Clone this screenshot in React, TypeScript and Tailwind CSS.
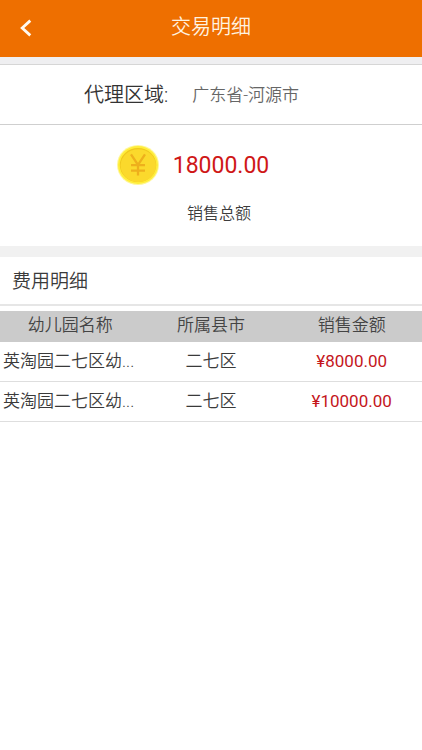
interface SaleRow {
  id: number;
  name: string;
  county: string;
  amount: string;
}

const rows: SaleRow[] = [
  { id: 1, name: '英淘园二七区幼...', county: '二七区', amount: '¥8000.00' },
  { id: 2, name: '英淘园二七区幼...', county: '二七区', amount: '¥10000.00' },
];

function BackIcon() {
  return (
    <svg viewBox="0 0 12 18" className="h-[18px] w-3" fill="none" aria-hidden="true">
      <path d="M10.3 1.6 2.2 9l8.1 7.4" stroke="#fffaf0" strokeWidth="2.8" />
    </svg>
  );
}

function CoinIcon() {
  return (
    <svg viewBox="0 0 42 40" className="h-10 w-[42px]" fill="none" aria-hidden="true">
      <ellipse cx="21" cy="20" rx="21" ry="20" fill="#fff799" />
      <ellipse cx="21" cy="20" rx="20" ry="19" fill="#ffed3a" />
      <ellipse cx="21" cy="20" rx="18.2" ry="17" fill="#f0c81e" />
      <ellipse cx="21.3" cy="20.6" rx="17.7" ry="16.3" fill="#fbd92c" />
      <path
        d="M14 9.4 21 20l7-10.6M21 19.6v11M14 20.2h14M14 25.6h14"
        stroke="#eeb01c"
        strokeWidth="2.3"
      />
    </svg>
  );
}

function Header() {
  return (
    <header className="relative flex h-[57px] items-center justify-center bg-[#ee6f00] pb-1">
      <button type="button" aria-label="返回" className="absolute inset-y-0 left-0 flex items-center px-5 pb-0.5">
        <BackIcon />
      </button>
      <h1 className="text-[20px] leading-7 font-[350] text-[#fff3e0]">交易明细</h1>
    </header>
  );
}

/** Three equal columns: kindergarten, county, amount. */
function SalesTable() {
  return (
    <table className="mt-[5px] w-full table-fixed border-separate border-spacing-0 text-[17px] leading-6 text-[#3a3a3a]">
      <thead>
        <tr className="h-[31px] bg-[#cbcbcb] text-[#444444]">
          <th className="p-0 pb-1 font-[350]">幼儿园名称</th>
          <th className="p-0 pb-1 font-[350]">所属县市</th>
          <th className="p-0 pb-1 font-[350]">销售金额</th>
        </tr>
      </thead>
      <tbody>
        {rows.map((row) => (
          <tr key={row.id} className="h-10">
            <td className="border-b border-[#dedede] p-0 pb-0.5 pl-[3px] font-[350] whitespace-nowrap">{row.name}</td>
            <td className="border-b border-[#dedede] p-0 pb-0.5 text-center font-[350]">{row.county}</td>
            <td className="border-b border-[#dedede] p-0 pb-0.5 text-center text-[#c4161c]">{row.amount}</td>
          </tr>
        ))}
      </tbody>
    </table>
  );
}

export default function App() {
  return (
    <div className="min-h-screen bg-white font-[Roboto,'Noto_Sans_CJK_SC',sans-serif]">
      <Header />
      <div className="h-2 border-b border-[#d6d6d6] bg-[#efeff1]" />
      <main>
        <section className="flex h-[60px] items-center border-b border-[#cfcfcf] pl-[84px]">
          <span className="text-[20px] leading-7 font-[350] text-[#333333]">代理区域:</span>
          <span className="ml-6 text-[17px] leading-6 font-[350] text-[#666666]">广东省-河源市</span>
        </section>

        <section className="flex h-[121px] flex-col items-center pt-5">
          <div className="flex w-full items-center justify-center gap-3.5 pr-9">
            <CoinIcon />
            <span className="pt-0.5 text-[23px] leading-8 text-[#cf1717]">18000.00</span>
          </div>
          <p className="mt-[17px] pl-4 text-[16px] leading-6 font-[350] text-[#3c3c3c]">销售总额</p>
        </section>

        <section className="border-t-[11px] border-[#f1f1f1]">
          <h2 className="flex h-[49px] items-center border-b-2 border-[#e6e6e6] px-3 pt-0.5 text-[19px] leading-7 font-[350] text-[#3a3a3a]">
            费用明细
          </h2>
          <SalesTable />
        </section>
      </main>
    </div>
  );
}
